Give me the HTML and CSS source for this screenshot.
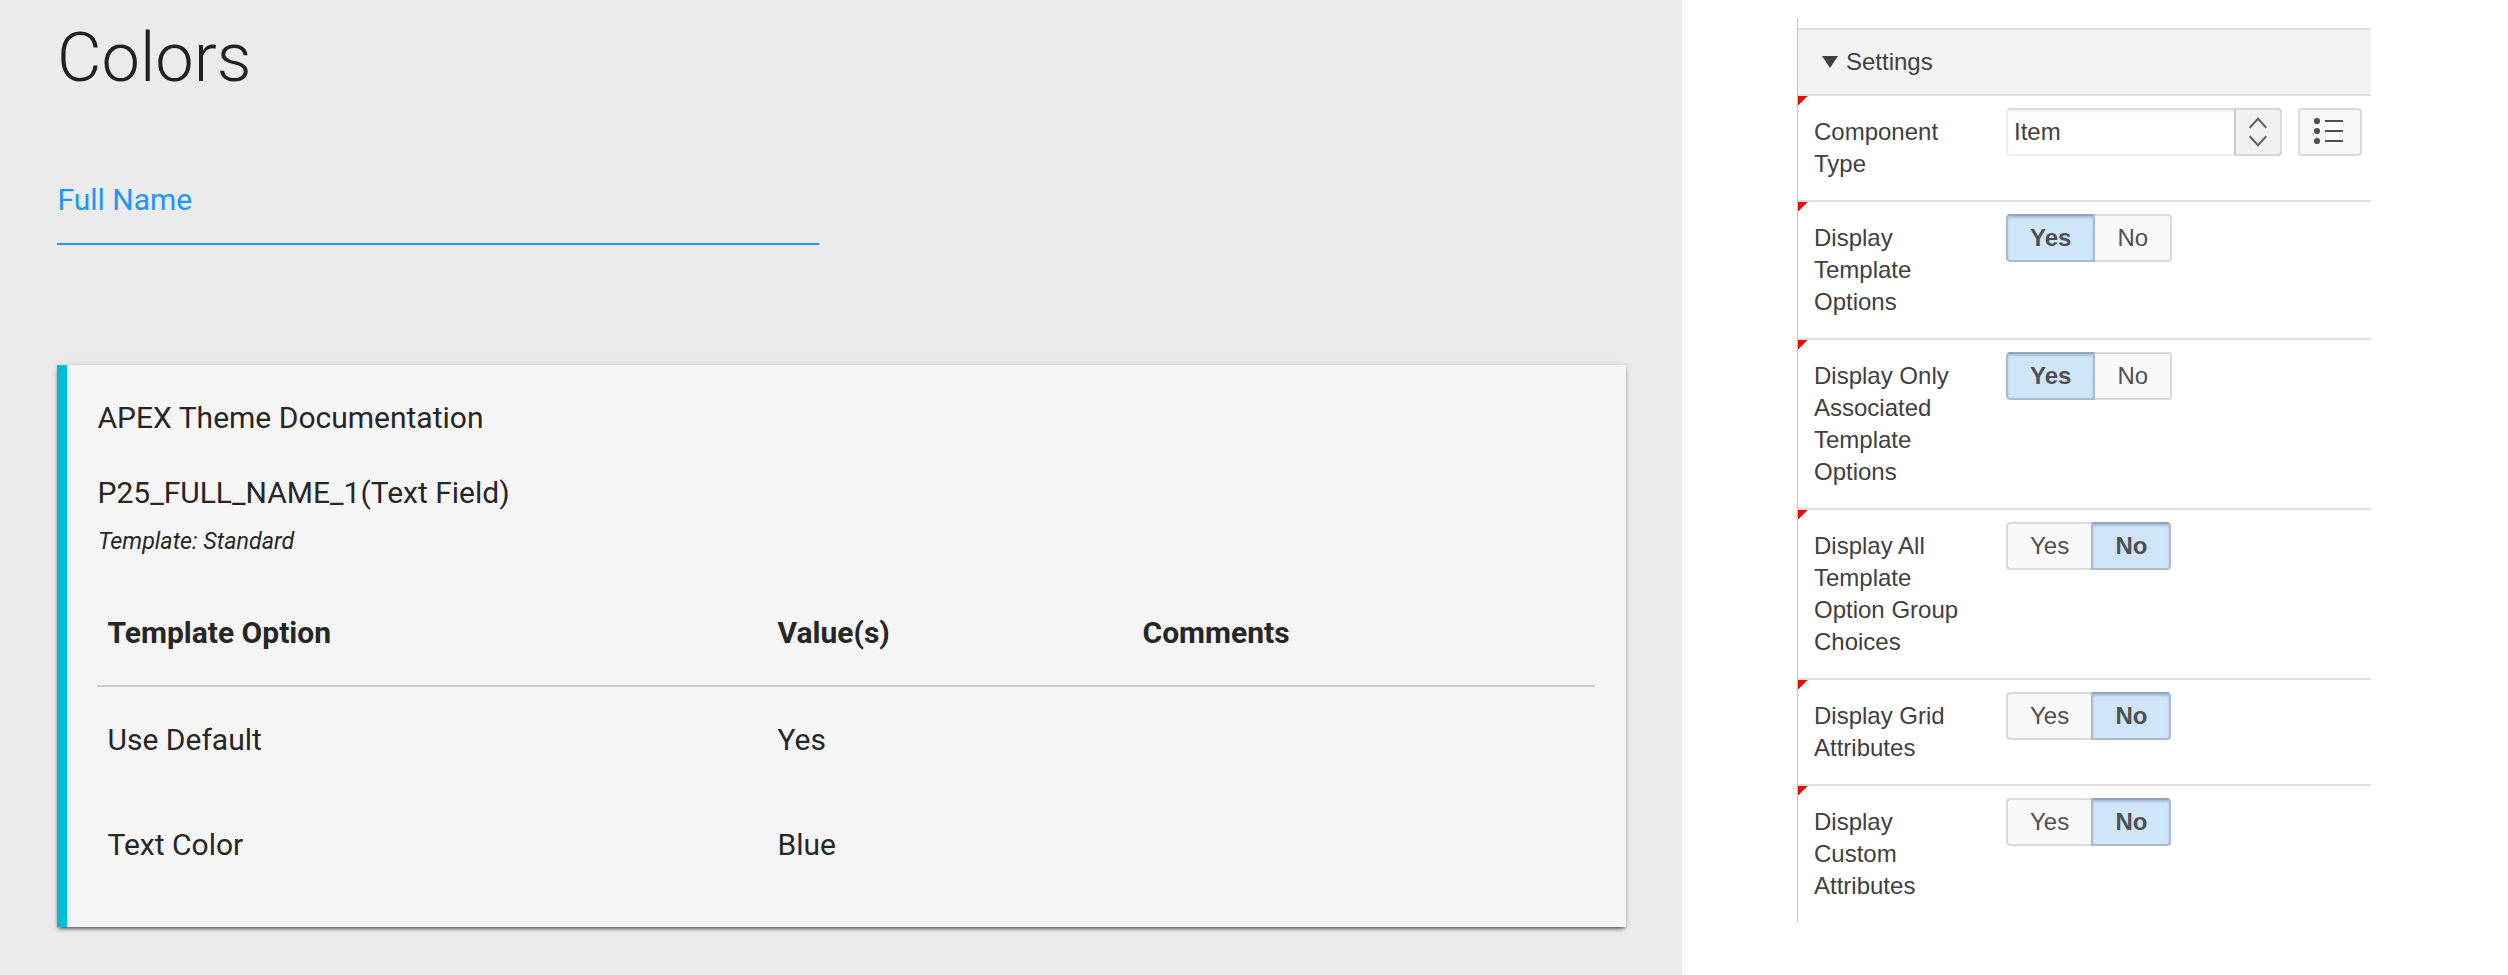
FILE: index.html
```
<!DOCTYPE html>
<html lang="en">
<head>
<meta charset="utf-8">
<title>Colors</title>
<link rel="stylesheet" href="styles.css">
</head>
<body>
<main class="page">
  <h1 class="title">Colors</h1>
  <div class="field">Full Name</div>
  <section class="card">
    <p class="card-title">APEX Theme Documentation</p>
    <p class="item-name">P25_FULL_NAME_1(Text Field)</p>
    <p class="template">Template: Standard</p>
    <div class="table">
      <div class="tr head"><span>Template Option</span><span>Value(s)</span><span>Comments</span></div>
      <div class="tr"><span>Use Default</span><span>Yes</span><span></span></div>
      <div class="tr"><span>Text Color</span><span>Blue</span><span></span></div>
    </div>
  </section>
</main>
<aside class="props">
  <div class="group">
    <svg class="caret" width="16" height="12" viewBox="0 0 16 12"><path d="M0 0h16L8 12z" fill="#404040"/></svg>
    <span>Settings</span>
  </div>
  <div class="prop">
    <div class="label">Component<br>Type</div>
    <div class="select">
      <span class="value">Item</span>
      <span class="arrows"><svg width="18" height="30" viewBox="0 0 18 30" fill="none" stroke="#606060" stroke-width="2"><path d="M.7 10.700 9 1.700l8.300 9M.7 19.300 9 28.300l8.300-9"/></svg></span>
    </div>
    <div class="list-btn"><svg width="28" height="28" viewBox="0 0 28 28"><g fill="#505050"><circle cx="4" cy="4" r="3.100"/><circle cx="4" cy="14" r="3.100"/><circle cx="4" cy="24" r="3.100"/><path d="M12 3h18v2H12zM12 13h18v2H12zM12 23h18v2H12z"/></g></svg></div>
  </div>
  <div class="prop">
    <div class="label">Display<br>Template<br>Options</div>
    <div class="toggle"><span class="opt yes on">Yes</span><span class="opt no">No</span></div>
  </div>
  <div class="prop">
    <div class="label">Display Only<br>Associated<br>Template<br>Options</div>
    <div class="toggle"><span class="opt yes on">Yes</span><span class="opt no">No</span></div>
  </div>
  <div class="prop">
    <div class="label">Display All<br>Template<br>Option Group<br>Choices</div>
    <div class="toggle"><span class="opt yes">Yes</span><span class="opt no on">No</span></div>
  </div>
  <div class="prop">
    <div class="label">Display Grid<br>Attributes</div>
    <div class="toggle"><span class="opt yes">Yes</span><span class="opt no on">No</span></div>
  </div>
  <div class="prop">
    <div class="label">Display<br>Custom<br>Attributes</div>
    <div class="toggle"><span class="opt yes">Yes</span><span class="opt no on">No</span></div>
  </div>
</aside>
</body>
</html>
```
FILE: styles.css
```
* { box-sizing: border-box; }
body {
  margin: 0;
  height: 975px;
  display: flex;
  align-items: flex-start;
  background: #fff;
  overflow: hidden;
}
h1, p { margin: 0; }

.page {
  width: 1682px;
  height: 975px;
  padding: 0 56px 0 57px;
  background: #ebebeb;
  color: #262626;
  font: 400 30px/40px Roboto, sans-serif;
}
.title {
  height: 160px;
  padding-top: 17px;
  font-size: 68.500px;
  line-height: 82px;
  font-weight: 300;
  color: #212121;
}
.field {
  width: 762px;
  height: 85px;
  padding-top: 20px;
  border-bottom: 2px solid #2196f3;
  color: #2196f3;
  text-indent: .5px;
}
.card {
  height: 562px;
  margin-top: 120px;
  padding: 33px 31px 0 30px;
  border-left: 10px solid #00bcd4;
  background: #f5f5f5;
  box-shadow: 0 4px 4px -2px rgba(0, 0, 0, .5), 0 0 8px rgba(0, 0, 0, .08), 0 1px 3px rgba(0, 0, 0, .2);
}
.card-title { height: 75px; text-indent: .5px; }
.item-name { height: 50px; text-indent: .5px; }
.template {
  height: 57px;
  padding-top: 3px;
  line-height: 30px;
  font-size: 23.300px;
  font-style: italic;
  text-indent: 1px;
}
.tr {
  display: grid;
  grid-template-columns: 670px 365px 1fr;
  height: 105px;
  padding: 33px 0 0 10.500px;
}
.head {
  height: 107px;
  border-bottom: 2px solid #cfcfcf;
  font-weight: 700;
}

.props {
  width: 574px;
  height: 904px;
  margin: 18px 0 0 115px;
  padding-top: 10px;
  border-left: 1px solid #c4c4c4;
  color: #404040;
  font: 24px/32px "Liberation Sans", Arial, sans-serif;
}
.group {
  display: flex;
  align-items: center;
  gap: 8px;
  height: 68px;
  padding-left: 24px;
  border-top: 2px solid #dfdfdf;
  border-bottom: 2px solid #dfdfdf;
  background: #f3f3f3;
}
.prop {
  display: flex;
  align-items: flex-start;
  padding-left: 16px;
  border-bottom: 2px solid #dfdfdf;
  background: linear-gradient(135deg, #f00 7px, transparent 7px) no-repeat;
  background-size: 10px 10px;
}
.prop:last-child { border-bottom: 0; }
.label {
  width: 192px;
  padding: 20px 0;
  white-space: nowrap;
}
.select, .toggle, .list-btn {
  display: flex;
  height: 48px;
  margin-top: 12px;
}
.select {
  width: 276px;
  border: 2px solid #ededed;
  border-top-color: #dcdcdc;
  border-radius: 4px;
  box-shadow: inset 0 2px 2px #f6f6f6;
}
.value {
  flex: 1;
  padding-left: 6px;
  line-height: 44px;
}
.arrows {
  display: flex;
  align-items: center;
  justify-content: center;
  width: 48px;
  margin: -2px;
  border: 2px solid #d9d9d9;
  border-left-color: #cbcbcb;
  border-radius: 0 4px 4px 0;
  background: #f1f1f1;
}
.list-btn {
  width: 64px;
  margin-left: 16px;
  padding: 7px 0 0 13px;
  border: 2px solid #dadada;
  border-radius: 4px;
  background: #f9f9f9;
}
.list-btn svg { overflow: visible; }
.opt {
  height: 48px;
  border: 2px solid #dadada;
  background: #f9f9f9;
  color: #505050;
  line-height: 44px;
}
.yes {
  width: 85px;
  padding-left: 22px;
  border-right: 0;
  border-radius: 4px 0 0 4px;
}
.no {
  width: 77px;
  padding-left: 22.500px;
  border-left: 0;
  border-radius: 0 4px 4px 0;
}
.opt.on {
  border: 2px solid #a9bbcd;
  border-top-color: #94a5b5;
  background: #cfe5fa;
  box-shadow: inset 0 2px 2px rgba(80, 110, 140, .3);
  font-weight: 700;
}
.yes.on { width: 89px; }
.no.on { width: 80px; }
```
